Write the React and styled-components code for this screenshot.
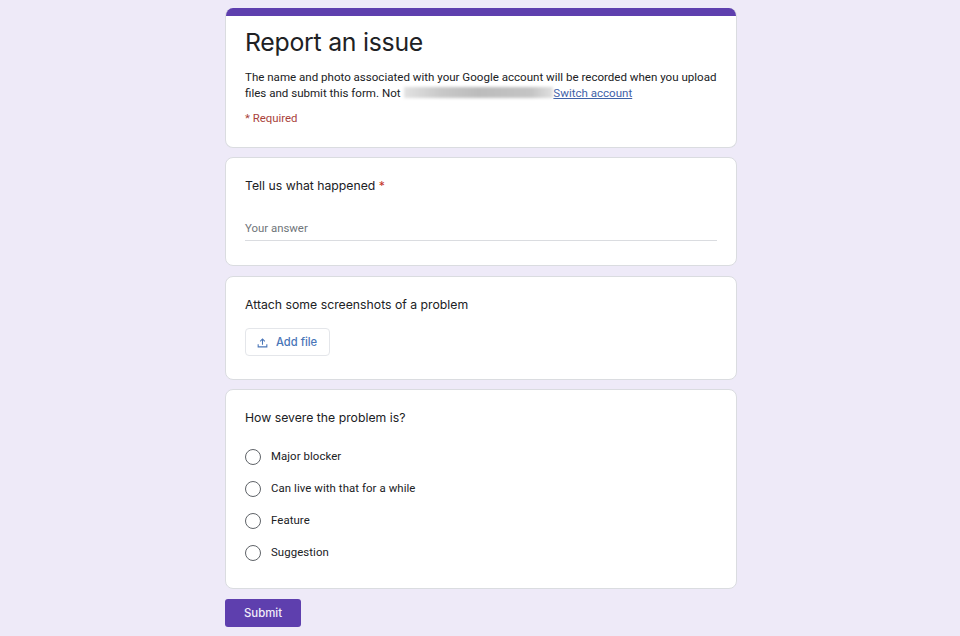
import React from "react";
import styled, { createGlobalStyle } from "styled-components";

const Global = createGlobalStyle`
  html, body { margin: 0; padding: 0; background: #eeeaf8; }
  body { font-family: Roboto, "Liberation Sans", sans-serif; color: #202124; }
`;

const Page = styled.main`
  width: 512px;
  height: 636px;
  margin: 0 0 0 225px;
  padding-top: 8px;
  box-sizing: border-box;
  overflow: hidden;
`;

const Card = styled.section`
  box-sizing: border-box;
  background: #fff;
  border: 1px solid #dadce0;
  border-radius: 8px;
  height: ${(p) => p.$h}px;
  margin-bottom: ${(p) => p.$mb}px;
  padding: 19px 19px 0 19px;
`;

const HeaderCard = styled.section`
  box-sizing: border-box;
  background: #fff;
  border: 1px solid #dadce0;
  border-top: none;
  border-radius: 8px;
  height: 140px;
  margin-bottom: 9px;
  overflow: hidden;
`;

const AccentBar = styled.div`
  height: 8px;
  background: #5e3fae;
  margin: 0 -1px;
`;

const HeaderBody = styled.div`
  padding: 0 19px;
`;

const Title = styled.h1`
  margin: 0;
  padding-top: 10px;
  font: 400 24.8px/32px Inter, Roboto, sans-serif;
  letter-spacing: -0.25px;
  color: #202124;
`;

const Notice = styled.p`
  margin: 11px 0 0;
  font: 400 11.55px/16px Roboto, sans-serif;
  color: #202124;
`;

const Redacted = styled.span`
  display: inline-block;
  width: 149px;
  height: 11px;
  vertical-align: -1px;
  margin: 0 0 0 1px;
  background: linear-gradient(90deg, #e2e2e2, #c8c8c8 25%, #bcbcbc 50%, #c4c4c4 85%, #e0e0e0);
  filter: blur(1.5px);
`;

const SwitchLink = styled.a`
  color: #3f62a8;
  text-decoration: underline;
`;

const Required = styled.div`
  margin-top: 9px;
  font: 400 11.4px/16px Roboto, sans-serif;
  color: #a9423c;
`;

const Question = styled.div`
  font: 400 12.25px/18px Inter, Roboto, sans-serif;
  color: #202124;
`;

const Star = styled.span`
  color: #c5362c;
`;

const AnswerInput = styled.div`
  margin-top: 21px;
  height: 24px;
  font: 400 11.4px/25px Roboto, sans-serif;
  color: #70757a;
  border-bottom: 1px solid #dadce0;
`;

const FileButton = styled.button`
  display: flex;
  align-items: center;
  gap: 7px;
  margin-top: 14px;
  width: 85px;
  height: 28px;
  padding: 0 0 0 10px;
  box-sizing: border-box;
  background: #fff;
  border: 1px solid #e4e6ea;
  border-radius: 4px;
  font: 500 11.2px Inter, Roboto, sans-serif;
  color: #4a76b8;
`;

const Options = styled.div`
  display: flex;
  flex-direction: column;
  gap: 12px;
  margin-top: 20px;
`;

const Option = styled.label`
  display: flex;
  align-items: flex-start;
  gap: 10px;
  height: 20px;
  font: 400 11.4px/18px Roboto, sans-serif;
  letter-spacing: 0.08px;
  color: #202124;
`;

const Radio = styled.span`
  flex: none;
  width: 14px;
  height: 14px;
  margin-top: 2px;
  border: 1.4px solid #5f6368;
  border-radius: 50%;
`;

const Submit = styled.button`
  display: block;
  width: 76px;
  height: 28px;
  padding: 0;
  background: #5e3fae;
  border: none;
  border-radius: 3px;
  font: 500 11.4px Inter, Roboto, sans-serif;
  color: #f1edf9;
`;

const UploadIcon = () => (
  <svg width="13" height="13" viewBox="0 0 24 24" fill="#4a76b8" aria-hidden="true">
    <path d="M11 16V7.8L8.4 10.4 7 9l5-5 5 5-1.4 1.4L13 7.8V16h-2z" />
    <path d="M3 15h2v4h14v-4h2v6H3v-6z" />
  </svg>
);

const options = ["Major blocker", "Can live with that for a while", "Feature", "Suggestion"];

export default function App() {
  return (
    <>
      <Global />
      <Page>
        <HeaderCard>
          <AccentBar />
          <HeaderBody>
            <Title>Report an issue</Title>
            <Notice>
              The name and photo associated with your Google account will be recorded when you upload files and
              submit this form. Not <Redacted />
              <SwitchLink href="#">Switch account</SwitchLink>
            </Notice>
            <Required>* Required</Required>
          </HeaderBody>
        </HeaderCard>

        <Card $h={109} $mb={10}>
          <Question>
            Tell us what happened <Star>*</Star>
          </Question>
          <AnswerInput>Your answer</AnswerInput>
        </Card>

        <Card $h={104} $mb={9}>
          <Question>Attach some screenshots of a problem</Question>
          <FileButton type="button">
            <UploadIcon />
            Add file
          </FileButton>
        </Card>

        <Card $h={200} $mb={10}>
          <Question>How severe the problem is?</Question>
          <Options>
            {options.map((o) => (
              <Option key={o}>
                <Radio />
                {o}
              </Option>
            ))}
          </Options>
        </Card>

        <Submit type="button">Submit</Submit>
      </Page>
    </>
  );
}
